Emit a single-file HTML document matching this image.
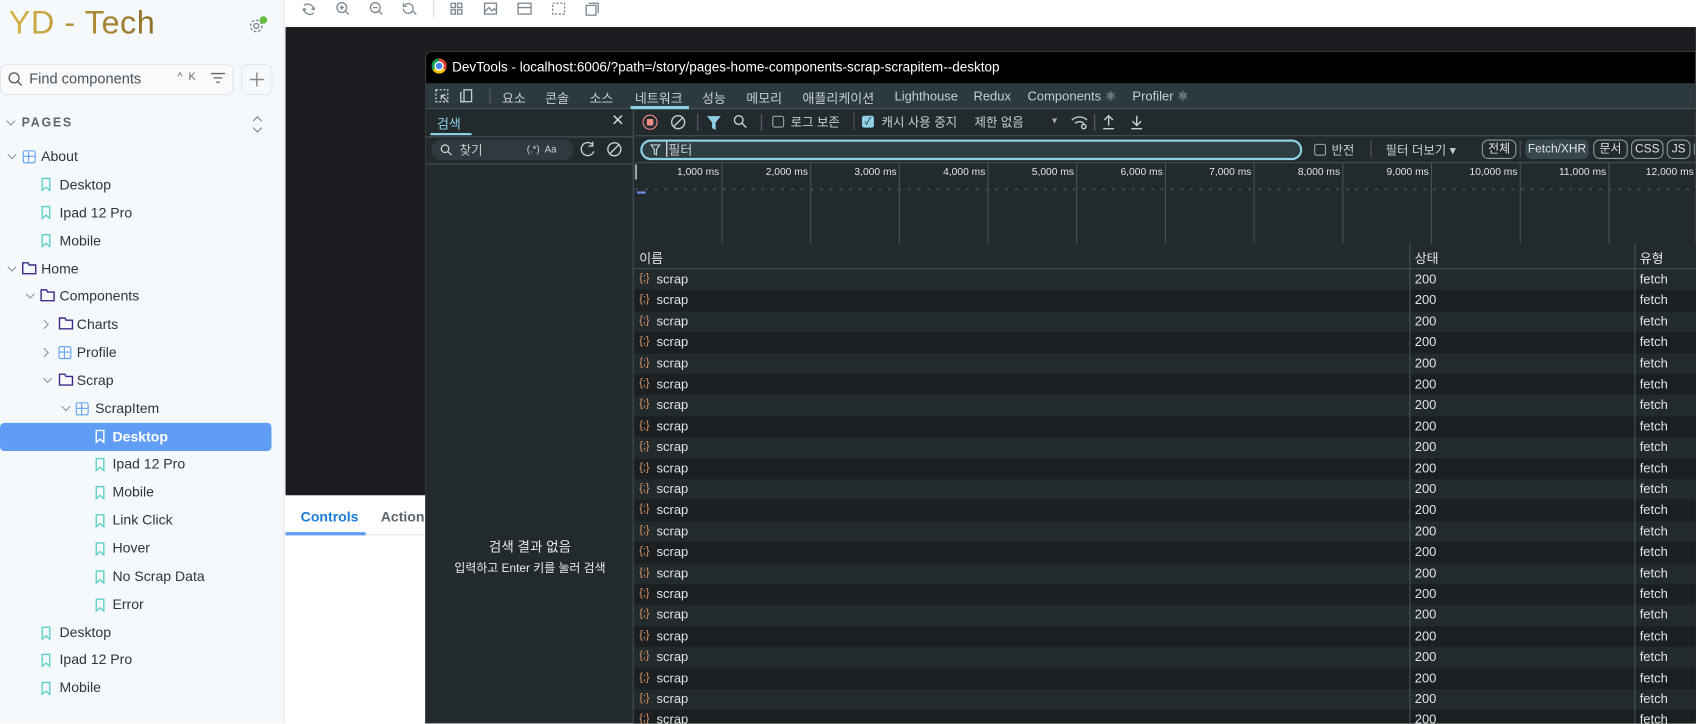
<!DOCTYPE html>
<html><head><meta charset="utf-8"><style>
*{box-sizing:border-box;margin:0;padding:0}
html,body{width:1696px;height:724px;overflow:hidden;background:#fff}
#w{position:absolute;left:0;top:0;width:1568px;height:669px;transform:scale(1.0816);transform-origin:0 0;font-family:"Liberation Sans","Noto Sans CJK KR",sans-serif;overflow:hidden}
.a{position:absolute;white-space:nowrap}
#sb{left:0;top:0;width:263px;height:669px;background:#f6f9fc;border-right:1px solid #e3e7ec}
.t{position:absolute;font-size:13px;color:#2e3438;white-space:nowrap}
.chev{position:absolute;width:6px;height:6px;border-right:1.2px solid #8a949c;border-bottom:1.2px solid #8a949c;transform:rotate(45deg)}
.chevr{position:absolute;width:6px;height:6px;border-right:1.2px solid #8a949c;border-bottom:1.2px solid #8a949c;transform:rotate(-45deg)}
.grid{position:absolute;width:12px;height:12px;border:1.3px solid #5d9ef3;border-radius:2px;background:linear-gradient(#5d9ef3,#5d9ef3) center/1.3px 100% no-repeat,linear-gradient(#5d9ef3,#5d9ef3) center/100% 1.3px no-repeat}
.fold{position:absolute;width:14px;height:12px}
.bm{position:absolute;width:9px;height:13px}
.dt{color:#c6ced2;font-size:12px}
.row{position:absolute;left:586px;width:982px;height:19.4px;font-size:12px;color:#dfe4e6}
.row span{position:absolute;top:2px}
.chip{position:absolute;top:129px;height:18px;border:1px solid #8f9ba1;border-radius:6px;color:#dfe4e6;font-size:11px;text-align:center;line-height:16px}
</style></head><body><div id="w">

<div class="a" id="sb">
 <div class="a" style="left:8px;top:5px;font-size:30px;letter-spacing:0.5px;background:linear-gradient(90deg,#d7b54a,#8e6d27);-webkit-background-clip:text;color:transparent">YD - Tech</div>
 <svg class="a" style="left:229px;top:16px" width="16" height="16" viewBox="0 0 16 16"><circle cx="8" cy="8" r="2.3" fill="none" stroke="#7a848c" stroke-width="1.2"/><circle cx="8" cy="8" r="5.3" fill="none" stroke="#7a848c" stroke-width="1.2" stroke-dasharray="2.5 1.6"/></svg>
 <div class="a" style="left:240px;top:15px;width:7px;height:7px;border-radius:50%;background:#66bf3c"></div>
 <div class="a" style="left:0;top:59px;width:216px;height:29px;border:1px solid #dfe5ec;border-radius:6px;background:#f8fafc"></div>
 <svg class="a" style="left:7px;top:66px" width="14" height="14" viewBox="0 0 14 14"><circle cx="6" cy="6" r="4.6" fill="none" stroke="#555" stroke-width="1.2"/><path d="M9.5 9.5L13 13" stroke="#555" stroke-width="1.2"/></svg>
 <div class="t" style="left:27px;top:65px;font-size:13.5px;color:#4a5258">Find components</div>
 <div class="t" style="left:164px;top:66px;font-size:10px;color:#666">^&nbsp; K</div>
 <svg class="a" style="left:195px;top:67px" width="13" height="11"><path d="M0 1h13M2.5 5h8M5 9h3" stroke="#666" stroke-width="1.2"/></svg>
 <div class="a" style="left:223px;top:59px;width:29px;height:29px;border:1px solid #dfe5ec;border-radius:6px"></div>
 <svg class="a" style="left:230px;top:66px" width="15" height="15"><path d="M7.5 1v13M1 7.5h13" stroke="#888" stroke-width="1.3"/></svg>
 <div class="chev" style="left:7px;top:109px"></div>
 <div class="t" style="left:20px;top:108px;font-size:11.5px;font-weight:bold;letter-spacing:1.6px;color:#5d666d">PAGES</div>
 <svg class="a" style="left:233px;top:107px" width="10" height="16"><path d="M1 5l4-4 4 4M1 11l4 4 4-4" fill="none" stroke="#888" stroke-width="1.1"/></svg>

 <div class="chev" style="left:8px;top:140px"></div><div class="grid" style="left:21px;top:139px"></div><div class="t" style="left:38px;top:137px">About</div>
 <svg class="bm" style="left:38px;top:164px" viewBox="0 0 9 13"><path d="M1 1h7v11L4.5 9 1 12z" fill="none" stroke="#5fd0c6" stroke-width="1.3"/></svg><div class="t" style="left:55px;top:163px">Desktop</div>
 <svg class="bm" style="left:38px;top:190px" viewBox="0 0 9 13"><path d="M1 1h7v11L4.5 9 1 12z" fill="none" stroke="#5fd0c6" stroke-width="1.3"/></svg><div class="t" style="left:55px;top:189px">Ipad 12 Pro</div>
 <svg class="bm" style="left:38px;top:216px" viewBox="0 0 9 13"><path d="M1 1h7v11L4.5 9 1 12z" fill="none" stroke="#5fd0c6" stroke-width="1.3"/></svg><div class="t" style="left:55px;top:215px">Mobile</div>
 <div class="chev" style="left:8px;top:244px"></div><svg class="fold" style="left:20px;top:242px" viewBox="0 0 14 12"><path d="M1 1h5l1 2h6v8H1z" fill="none" stroke="#3b2a8a" stroke-width="1.3"/></svg><div class="t" style="left:38px;top:241px">Home</div>
 <div class="chev" style="left:25px;top:269px"></div><svg class="fold" style="left:37px;top:267px" viewBox="0 0 14 12"><path d="M1 1h5l1 2h6v8H1z" fill="none" stroke="#3b2a8a" stroke-width="1.3"/></svg><div class="t" style="left:55px;top:266px">Components</div>
 <div class="chevr" style="left:38px;top:297px"></div><svg class="fold" style="left:54px;top:293px" viewBox="0 0 14 12"><path d="M1 1h5l1 2h6v8H1z" fill="none" stroke="#3b2a8a" stroke-width="1.3"/></svg><div class="t" style="left:71px;top:292px">Charts</div>
 <div class="chevr" style="left:38px;top:323px"></div><div class="grid" style="left:54px;top:320px"></div><div class="t" style="left:71px;top:318px">Profile</div>
 <div class="chev" style="left:41px;top:347px"></div><svg class="fold" style="left:54px;top:345px" viewBox="0 0 14 12"><path d="M1 1h5l1 2h6v8H1z" fill="none" stroke="#3b2a8a" stroke-width="1.3"/></svg><div class="t" style="left:71px;top:344px">Scrap</div>
 <div class="chev" style="left:58px;top:373px"></div><div class="grid" style="left:70px;top:372px"></div><div class="t" style="left:88px;top:370px">ScrapItem</div>
 <div class="a" style="left:0;top:391px;width:251px;height:26px;background:#5f9ef4;border-radius:4px"></div>
 <svg class="bm" style="left:88px;top:397px" viewBox="0 0 9 13"><path d="M1 1h7v11L4.5 9 1 12z" fill="none" stroke="#fff" stroke-width="1.3"/></svg><div class="t" style="left:104px;top:396px;color:#fff;font-weight:bold">Desktop</div>
 <svg class="bm" style="left:88px;top:423px" viewBox="0 0 9 13"><path d="M1 1h7v11L4.5 9 1 12z" fill="none" stroke="#5fd0c6" stroke-width="1.3"/></svg><div class="t" style="left:104px;top:421px">Ipad 12 Pro</div>
 <svg class="bm" style="left:88px;top:449px" viewBox="0 0 9 13"><path d="M1 1h7v11L4.5 9 1 12z" fill="none" stroke="#5fd0c6" stroke-width="1.3"/></svg><div class="t" style="left:104px;top:447px">Mobile</div>
 <svg class="bm" style="left:88px;top:475px" viewBox="0 0 9 13"><path d="M1 1h7v11L4.5 9 1 12z" fill="none" stroke="#5fd0c6" stroke-width="1.3"/></svg><div class="t" style="left:104px;top:473px">Link Click</div>
 <svg class="bm" style="left:88px;top:501px" viewBox="0 0 9 13"><path d="M1 1h7v11L4.5 9 1 12z" fill="none" stroke="#5fd0c6" stroke-width="1.3"/></svg><div class="t" style="left:104px;top:499px">Hover</div>
 <svg class="bm" style="left:88px;top:527px" viewBox="0 0 9 13"><path d="M1 1h7v11L4.5 9 1 12z" fill="none" stroke="#5fd0c6" stroke-width="1.3"/></svg><div class="t" style="left:104px;top:525px">No Scrap Data</div>
 <svg class="bm" style="left:88px;top:553px" viewBox="0 0 9 13"><path d="M1 1h7v11L4.5 9 1 12z" fill="none" stroke="#5fd0c6" stroke-width="1.3"/></svg><div class="t" style="left:104px;top:551px">Error</div>
 <svg class="bm" style="left:38px;top:579px" viewBox="0 0 9 13"><path d="M1 1h7v11L4.5 9 1 12z" fill="none" stroke="#5fd0c6" stroke-width="1.3"/></svg><div class="t" style="left:55px;top:577px">Desktop</div>
 <svg class="bm" style="left:38px;top:604px" viewBox="0 0 9 13"><path d="M1 1h7v11L4.5 9 1 12z" fill="none" stroke="#5fd0c6" stroke-width="1.3"/></svg><div class="t" style="left:55px;top:602px">Ipad 12 Pro</div>
 <svg class="bm" style="left:38px;top:630px" viewBox="0 0 9 13"><path d="M1 1h7v11L4.5 9 1 12z" fill="none" stroke="#5fd0c6" stroke-width="1.3"/></svg><div class="t" style="left:55px;top:628px">Mobile</div>
</div>

<svg class="a" style="left:263px;top:0" width="310" height="25" fill="none" stroke="#7b8790" stroke-width="1.2">
 <path d="M18 5a5.5 5.5 0 0 1 9 4M28 7l-1 2-2-1"/><path d="M27 12a5.5 5.5 0 0 1-9-4M17 10l1-2 2 1"/>
 <circle cx="53" cy="7" r="4.5"/><path d="M51 7h4M53 5v4M56.5 10.5l3 3"/>
 <circle cx="84" cy="7" r="4.5"/><path d="M82 7h4M87.5 10.5l3 3"/>
 <path d="M111 5a4.5 4.5 0 1 1-1 3M110 3v3h3M119 10.5l3 3"/>
 <path d="M138 0v16" stroke="#dde"/>
 <rect x="154" y="3" width="4" height="4"/><rect x="160" y="3" width="4" height="4"/><rect x="154" y="9" width="4" height="4"/><rect x="160" y="9" width="4" height="4"/>
 <rect x="185" y="3" width="11" height="10"/><path d="M185 11l4-4 3 3 2-2 2 2"/>
 <rect x="216" y="3" width="12" height="10"/><path d="M216 7h12"/>
 <rect x="248" y="3" width="11" height="10" stroke-dasharray="2 1.5"/>
 <rect x="279" y="5" width="9" height="9"/><path d="M281 3h9v9"/>
</svg>

<div class="a" style="left:264px;top:25px;width:1304px;height:433px;background:#1b1c1f"></div>
<div class="a" style="left:264px;top:458px;width:1304px;height:211px;background:#fff"></div>
<div class="a" style="left:264px;top:494px;width:1304px;height:1px;background:#e6e9ec"></div>
<div class="a" style="left:278px;top:470px;font-size:13px;font-weight:bold;color:#1e7bd8">Controls</div>
<div class="a" style="left:264px;top:492px;width:74px;height:3px;background:#5f9ef4"></div>
<div class="a" style="left:352px;top:470px;font-size:13px;font-weight:bold;color:#5d666d">Actions</div>

<div class="a" style="left:393px;top:47px;width:1175px;height:622px;background:#222a2d;border:1px solid #3a3a3a;border-radius:6px 0 0 0;overflow:hidden">
 <div class="a" style="left:0;top:0;width:1175px;height:29px;background:#000"></div>
 <div class="a" style="left:5px;top:6px;width:14px;height:14px;border-radius:50%;background:conic-gradient(#db4437 0 120deg,#f4c20d 120deg 240deg,#0f9d58 240deg)"></div>
 <div class="a" style="left:9px;top:10px;width:6px;height:6px;border-radius:50%;background:#4285f4;box-shadow:0 0 0 1.3px #fff"></div>
 <div class="a" style="left:24px;top:7px;font-size:12.5px;color:#fff">DevTools - localhost:6006/?path=/story/pages-home-components-scrap-scrapitem--desktop</div>
 <div class="a" style="left:0;top:29px;width:1175px;height:24px;background:#2c3a40;border-bottom:1px solid #45535a"></div>
 <svg class="a" style="left:8px;top:34px" width="60" height="14" fill="none" stroke="#c6ced2" stroke-width="1.2"><rect x="1" y="1" width="11" height="11" stroke-dasharray="2 1.5"/><path d="M6 6l6 6M6 6v4M6 6h4"/><rect x="27" y="1" width="7" height="11"/><path d="M24 3v9h4"/><path d="M51 0v14" stroke="#556"/></svg>
 <div class="a dt" style="left:70px;top:34px">요소</div>
 <div class="a dt" style="left:110px;top:34px">콘솔</div>
 <div class="a dt" style="left:151px;top:34px">소스</div>
 <div class="a dt" style="left:193px;top:34px">네트워크</div>
 <div class="a" style="left:189px;top:50px;width:54px;height:3px;background:#8ed0e6"></div>
 <div class="a dt" style="left:255px;top:34px">성능</div>
 <div class="a dt" style="left:296px;top:34px">메모리</div>
 <div class="a dt" style="left:348px;top:34px">애플리케이션</div>
 <div class="a dt" style="left:433px;top:34px">Lighthouse</div>
 <div class="a dt" style="left:506px;top:34px">Redux</div>
 <div class="a dt" style="left:556px;top:34px">Components ⚛</div>
 <div class="a dt" style="left:653px;top:34px">Profiler ⚛</div>

 <div class="a" style="left:0;top:53px;width:192px;height:569px;background:#222a2d;border-right:1px solid #45535a"></div>
 <div class="a" style="left:10px;top:58px;font-size:12px;color:#8ed0e6">검색</div>
 <div class="a" style="left:4px;top:75px;width:38px;height:2px;background:#8ed0e6"></div>
 <div class="a" style="left:171px;top:54px;font-size:15px;color:#c6ced2">✕</div>
 <div class="a" style="left:0;top:78px;width:192px;height:1px;background:#45535a"></div>
 <div class="a" style="left:5px;top:81px;width:131px;height:19px;border-radius:10px;background:#2f3a3f"></div>
 <svg class="a" style="left:13px;top:85px" width="11" height="11" fill="none" stroke="#c6ced2" stroke-width="1.2"><circle cx="4.5" cy="4.5" r="3.5"/><path d="M7 7l3.5 3.5"/></svg>
 <div class="a" style="left:31px;top:83px;font-size:11.5px;color:#c6ced2">찾기</div>
 <div class="a" style="left:93px;top:85px;font-size:9px;color:#c6ced2">(.*)&nbsp; Aa</div>
 <svg class="a" style="left:142px;top:82px" width="42" height="16" fill="none" stroke="#c6ced2" stroke-width="1.3"><path d="M12 4a6 6 0 1 0 1 6M12 1v4h-4"/><circle cx="32" cy="8" r="6"/><path d="M28 12l8-8"/></svg>
 <div class="a" style="left:0;top:103px;width:192px;height:1px;background:#45535a"></div>
 <div class="a" style="left:0;top:447px;width:192px;text-align:center;font-size:12.5px;color:#e8ecee">검색 결과 없음</div>
 <div class="a" style="left:0;top:469px;width:192px;text-align:center;font-size:11px;color:#e8ecee">입력하고 Enter 키를 눌러 검색</div>

 <div class="a" style="left:193px;top:53px;width:982px;height:25px;border-bottom:1px solid #45535a"></div>
 <div class="a" style="left:200px;top:58px;width:14px;height:14px;border-radius:50%;border:1.5px solid #f28b82"></div>
 <div class="a" style="left:204px;top:62px;width:6px;height:6px;border-radius:1px;background:#f28b82"></div>
 <svg class="a" style="left:225px;top:57px" width="120" height="16" fill="none" stroke="#c6ced2" stroke-width="1.3"><circle cx="8" cy="8" r="6"/><path d="M4 12l8-8"/><path d="M26 0v16" stroke="#556"/><path d="M36 3h10l-4 5v6l-2-1V8z" fill="#8ed0e6" stroke="#8ed0e6"/><circle cx="64" cy="6" r="4"/><path d="M67 9l4 4"/><path d="M85 0v16" stroke="#556"/></svg>
 <div class="a" style="left:320px;top:59px;width:11px;height:11px;border:1px solid #9aa4aa;border-radius:2px"></div>
 <div class="a dt" style="left:337px;top:57px;font-size:11.5px">로그 보존</div>
 <div class="a" style="left:395px;top:56px;width:1px;height:16px;background:#556"></div>
 <div class="a" style="left:403px;top:59px;width:11px;height:11px;background:#8ed0e6;border-radius:2px;color:#222;font-size:9px;line-height:11px;text-align:center">✓</div>
 <div class="a dt" style="left:421px;top:57px;font-size:11.5px">캐시 사용 중지</div>
 <div class="a dt" style="left:507px;top:57px;font-size:11.5px">제한 없음</div>
 <div class="a" style="left:577px;top:59px;font-size:8px;color:#aab">▼</div>
 <svg class="a" style="left:596px;top:57px" width="80" height="16" fill="none" stroke="#c6ced2" stroke-width="1.3"><path d="M1 6a10 10 0 0 1 14 0M4 9a6 6 0 0 1 8 0"/><circle cx="12" cy="12" r="2"/><path d="M22 0v16" stroke="#556"/><path d="M35 2v9M31 6l4-4 4 4M30 14h10"/><path d="M61 2v9M57 7l4 4 4-4M56 14h10"/></svg>

 <div class="a" style="left:193px;top:78px;width:982px;height:25px;border-bottom:1px solid #45535a"></div>
 <div class="a" style="left:198px;top:81px;width:612px;height:19px;border:2px solid #8ed0e6;border-radius:10px;background:#2f3c42"></div>
 <svg class="a" style="left:207px;top:85px" width="10" height="11" fill="none" stroke="#c6ced2" stroke-width="1.1"><path d="M1 1h8L6 5v5L4 9V5z"/></svg>
 <div class="a" style="left:222px;top:83px;width:1px;height:14px;background:#fff"></div>
 <div class="a" style="left:224px;top:82px;font-size:12px;color:#c6ced2">필터</div>
 <div class="a" style="left:821px;top:85px;width:11px;height:11px;border:1px solid #9aa4aa;border-radius:2px"></div>
 <div class="a dt" style="left:837px;top:83px;font-size:11.5px">반전</div>
 <div class="a" style="left:873px;top:82px;width:1px;height:16px;background:#556"></div>
 <div class="a dt" style="left:887px;top:83px;font-size:11.5px">필터 더보기 ▾</div>
 <div class="chip" style="left:976px;top:81px;width:32px">전체</div>
 <div class="a" style="left:1011px;top:82px;width:1px;height:16px;background:#556"></div>
 <div class="chip" style="left:1016px;top:81px;width:59px;background:#38474e;border-color:#38474e">Fetch/XHR</div>
 <div class="chip" style="left:1079px;top:81px;width:32px">문서</div>
 <div class="chip" style="left:1114px;top:81px;width:30px">CSS</div>
 <div class="chip" style="left:1147px;top:81px;width:22px">JS</div>
 <div class="chip" style="left:1172px;top:81px;width:20px"></div>

 <div class="a" style="left:193px;top:103px;width:982px;height:75px;background:#222a2d;border-bottom:1px solid #45535a"></div>
 <div class="a" style="left:193px;top:126px;width:982px;height:2px;background:repeating-linear-gradient(90deg,#3a4449 0 3px,transparent 3px 9px)"></div>
 <div class="a" style="left:195px;top:129px;width:8px;height:2px;background:#6c8cf0"></div>
 <div class="a" style="left:193px;top:104px;width:2px;height:14px;background:#9aa4aa"></div>
</div>

<div id="tl"></div>

<div class="a" style="left:586px;top:225px;width:982px;height:24px;background:#222a2d;border-bottom:1px solid #45535a"></div>
<div class="a" style="left:591px;top:230px;font-size:12px;color:#dfe4e6">이름</div>
<div class="a" style="left:1308px;top:230px;font-size:12px;color:#dfe4e6">상태</div>
<div class="a" style="left:1516px;top:230px;font-size:12px;color:#dfe4e6">유형</div>
<div id="rows"></div>
<div class="a" style="left:1303px;top:225px;width:1px;height:444px;background:#45535a"></div>
<div class="a" style="left:1511px;top:225px;width:1px;height:444px;background:#45535a"></div>

<script>
var tl='',xs=[667,749,831,913,995,1077,1159,1241,1323,1405,1487],i;
for(i=0;i<xs.length;i++){
 tl+='<div class="a" style="left:'+xs[i]+'px;top:150px;width:1px;height:75px;background:#45535a"></div>';
 tl+='<div class="a" style="left:'+(xs[i]-80)+'px;top:154px;width:78px;text-align:right;font-size:9.5px;color:#dfe4e6">'+(i+1)+',000 ms</div>';
}
tl+='<div class="a" style="left:1486px;top:154px;width:80px;text-align:right;font-size:9.5px;color:#dfe4e6">12,000 ms</div>';
document.getElementById('tl').outerHTML=tl;
var r='';
for(i=0;i<22;i++){
 var y=249+i*19.4;
 r+='<div class="row" style="top:'+y+'px;background:'+(i%2?'#1b1f21':'#222a2d')+'"><span style="left:5px;color:#e29a6a;font-size:10px;top:3px">{;}</span><span style="left:21px">scrap</span><span style="left:722px">200</span><span style="left:930px">fetch</span></div>';
}
document.getElementById('rows').outerHTML=r;
</script>
</div></body></html>
